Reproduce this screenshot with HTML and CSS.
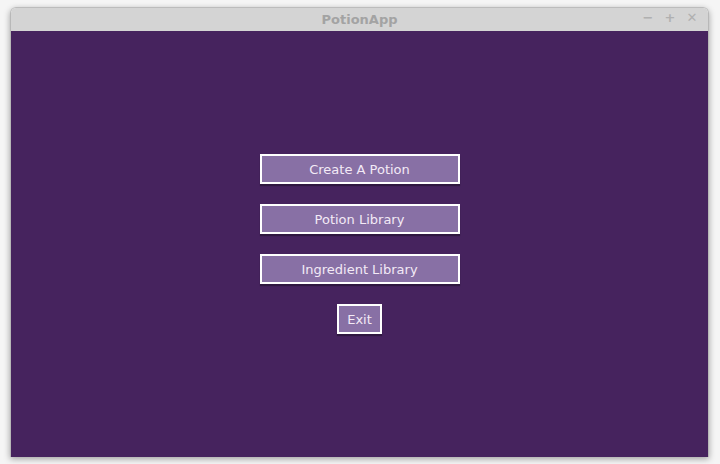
FILE: index.html
```html
<!DOCTYPE html>
<html>
<head>
<meta charset="utf-8">
<link rel="stylesheet" href="styles.css">
</head>
<body>
<div class="window">
  <div class="titlebar">
    <span class="title">PotionApp</span>
    <div class="controls">
      <span class="ctl">&#8722;</span>
      <span class="ctl">+</span>
      <span class="ctl">&#10005;</span>
    </div>
  </div>
  <div class="content">
    <div class="menu">
      <button class="btn wide">Create A Potion</button>
      <button class="btn wide">Potion Library</button>
      <button class="btn wide">Ingredient Library</button>
      <button class="btn">Exit</button>
    </div>
  </div>
</div>
</body>
</html>
```
FILE: styles.css
```css
html, body {
  margin: 0;
  padding: 0;
  width: 720px;
  height: 464px;
  background: #f5f5f5;
  overflow: hidden;
}
.window {
  position: absolute;
  left: 10px;
  top: 7px;
  width: 699px;
  height: 450px;
  border-radius: 6px 6px 0 0;
  box-shadow: 0 2px 6px rgba(0,0,0,0.35);
  display: flex;
  flex-direction: column;
  overflow: hidden;
  border-left: 1px solid #b8b8b8;
  border-right: 1px solid #b8b8b8;
  border-top: 1px solid #bcbcbc;
  box-sizing: border-box;
}
.titlebar {
  height: 23px;
  background: #d4d4d4;
  position: relative;
  display: flex;
  align-items: center;
  justify-content: center;
  font-family: "DejaVu Sans", sans-serif;
}
.title {
  font-weight: bold;
  font-size: 13px;
  color: #a3a3a3;
}
.controls {
  position: absolute;
  right: 10px;
  top: 2px;
  display: flex;
  gap: 10px;
}
.ctl {
  font-weight: bold;
  font-size: 13px;
  color: #b0b0b0;
  width: 12px;
  text-align: center;
}
.content {
  flex: 1;
  background: #46235e;
  display: flex;
  align-items: center;
  justify-content: center;
}
.menu {
  display: flex;
  flex-direction: column;
  align-items: center;
  gap: 20px;
}
.btn {
  height: 30px;
  padding: 0 8px;
  border: 2px solid #ffffff;
  background: #8870a5;
  color: #f3eaf6;
  font-family: "DejaVu Sans", sans-serif;
  font-size: 13px;
  box-shadow: 0 2px 1px rgba(0,0,0,0.3);
  margin: 0;
}
.btn.wide {
  width: 200px;
}
```
